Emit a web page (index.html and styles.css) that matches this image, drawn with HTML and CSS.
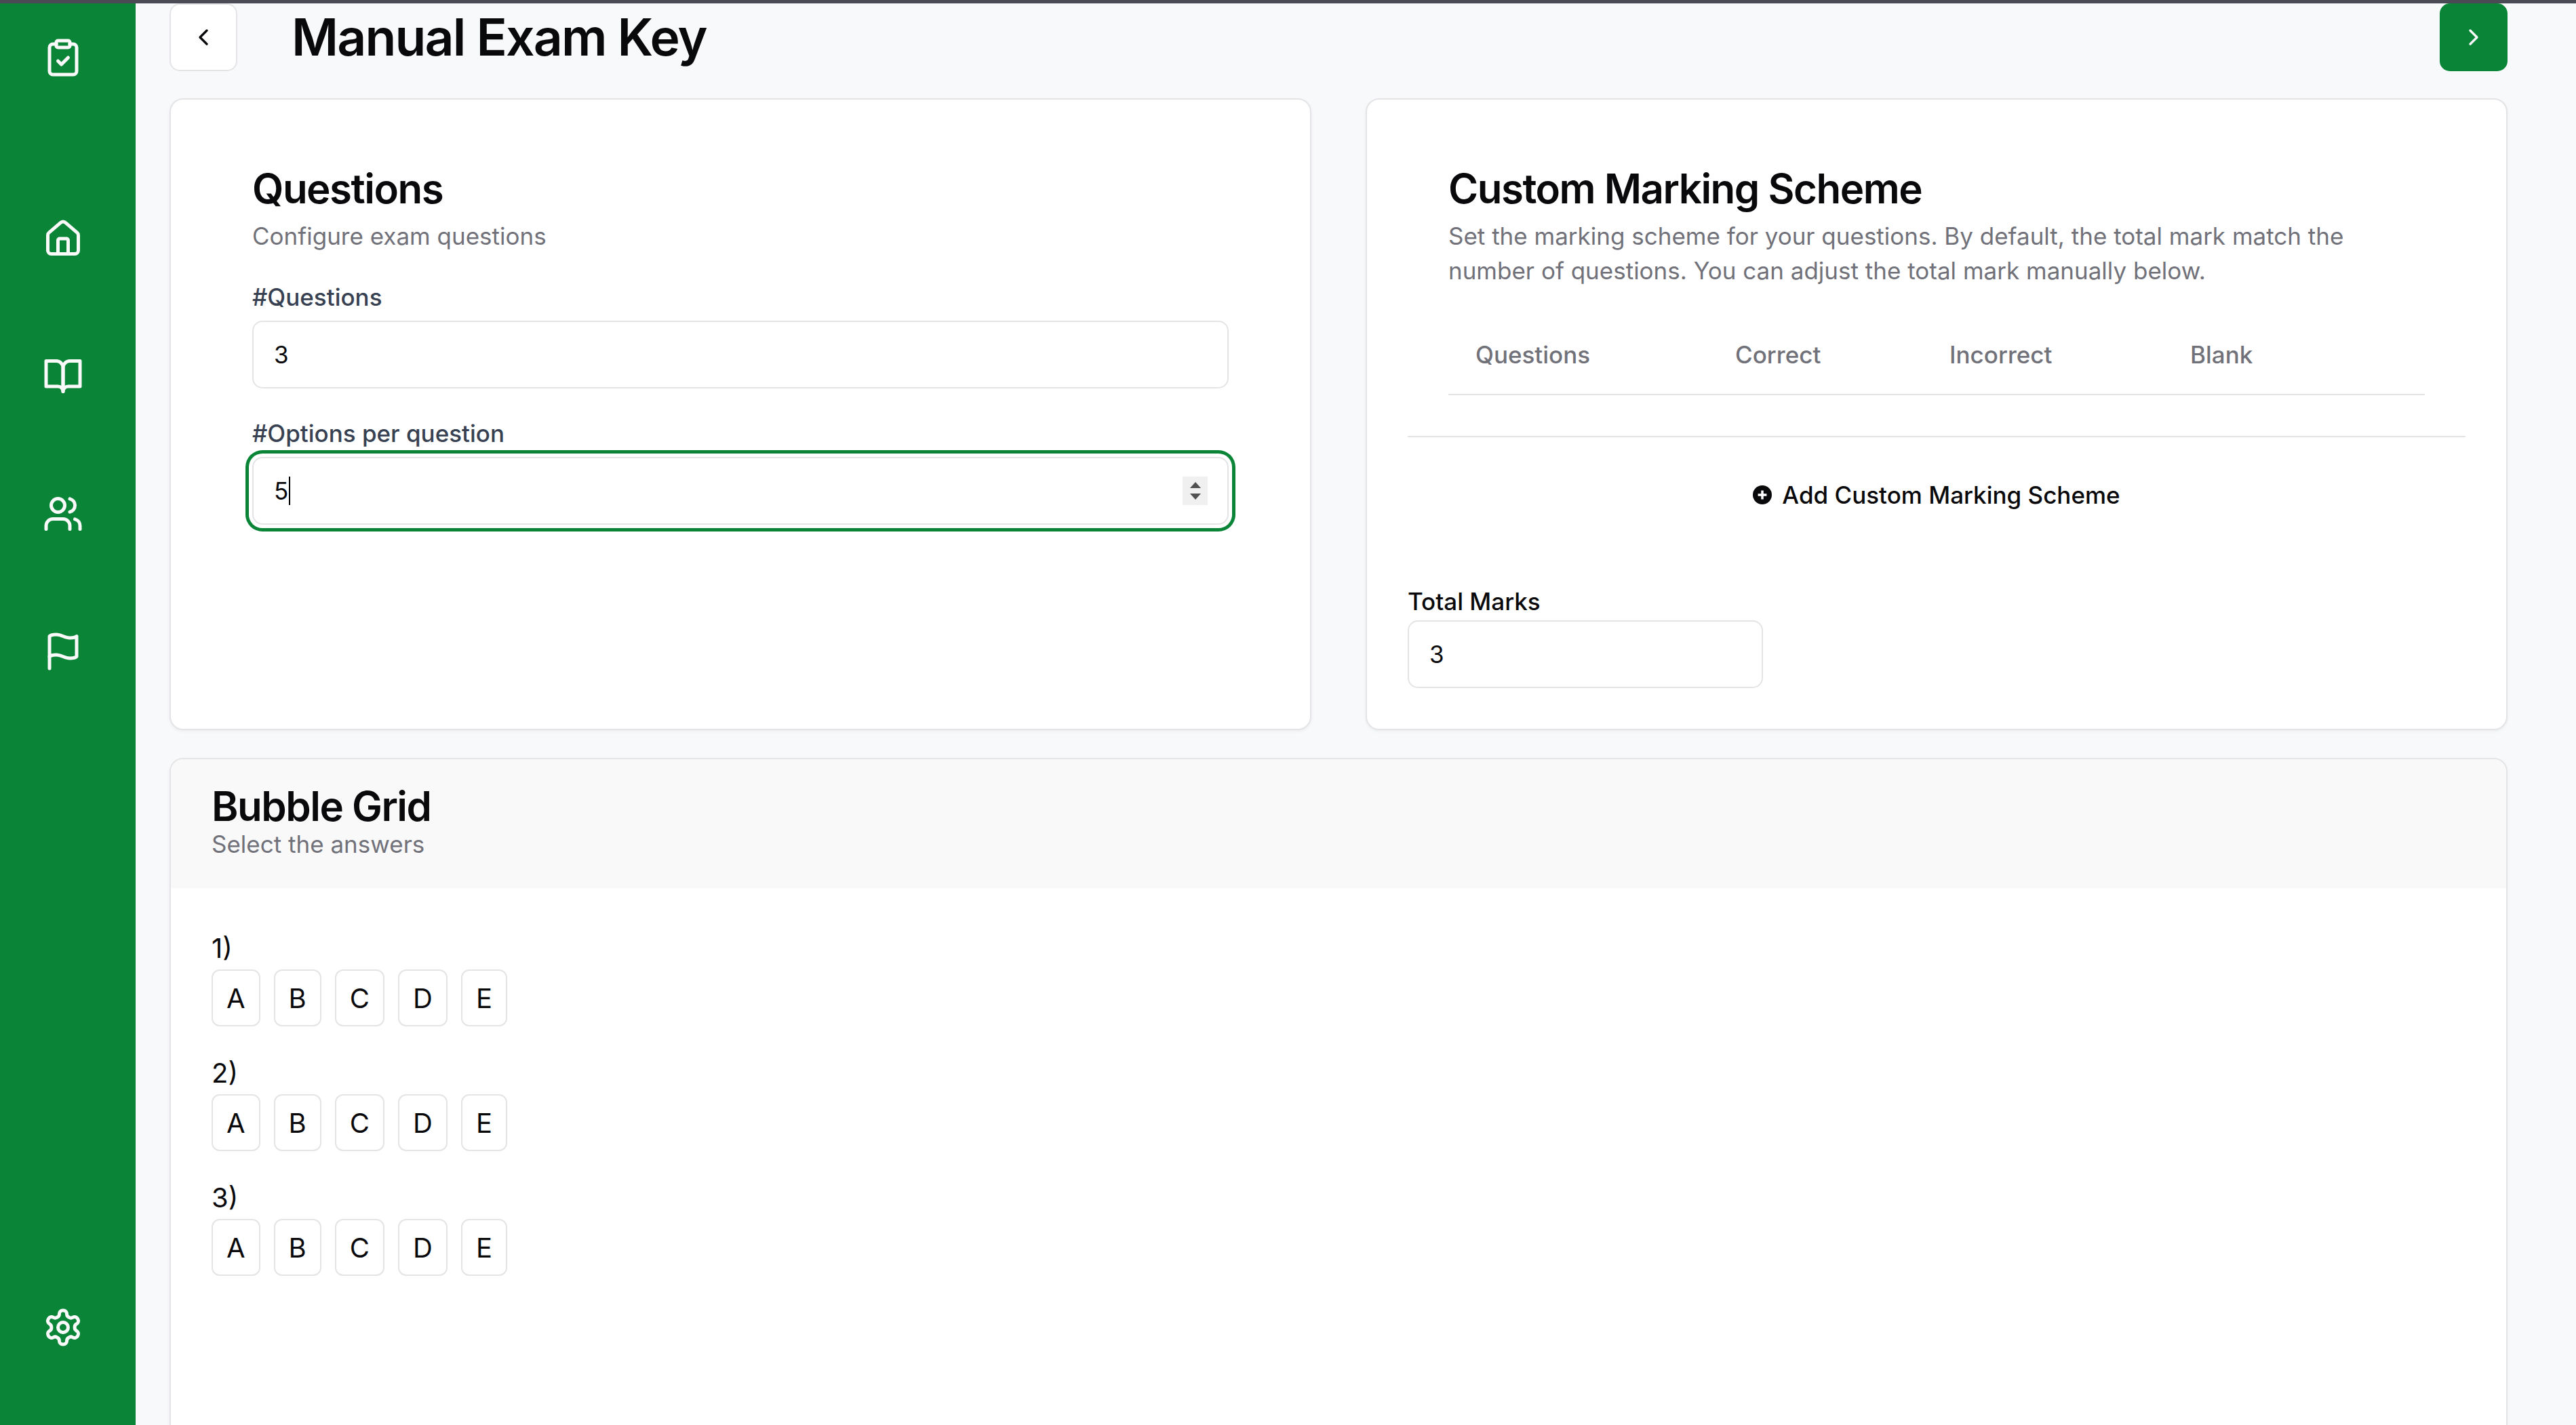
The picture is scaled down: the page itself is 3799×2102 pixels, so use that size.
FILE: index.html
```html
<!DOCTYPE html>
<html lang="en">
<head>
    <meta charset="UTF-8">
    <title>Manual Exam Key</title>
    <link rel="stylesheet" href="styles.css">
</head>
<body>
    <div class="top-strip"></div>
    <div class="app">
        <!-- Sidebar -->
        <aside class="sidebar">
            <svg class="side-icon logo" viewBox="0 0 24 24"><rect x="8" y="2" width="8" height="4" rx="1"/><path d="M16 4h2a2 2 0 0 1 2 2v14a2 2 0 0 1-2 2H6a2 2 0 0 1-2-2V6a2 2 0 0 1 2-2h2"/><path d="m9 14 2 2 4-4"/></svg>
            <nav class="side-nav">
                <svg class="side-icon" viewBox="0 0 24 24"><path d="M15 21v-8a1 1 0 0 0-1-1h-4a1 1 0 0 0-1 1v8"/><path d="M3 10a2 2 0 0 1 .709-1.528l7-5.999a2 2 0 0 1 2.582 0l7 5.999A2 2 0 0 1 21 10v9a2 2 0 0 1-2 2H5a2 2 0 0 1-2-2z"/></svg>
                <svg class="side-icon" viewBox="0 0 24 24"><path d="M2 3h6a4 4 0 0 1 4 4v14a3 3 0 0 0-3-3H2z"/><path d="M22 3h-6a4 4 0 0 0-4 4v14a3 3 0 0 1 3-3h7z"/></svg>
                <svg class="side-icon" viewBox="0 0 24 24"><path d="M16 21v-2a4 4 0 0 0-4-4H6a4 4 0 0 0-4 4v2"/><circle cx="9" cy="7" r="4"/><path d="M22 21v-2a4 4 0 0 0-3-3.87"/><path d="M16 3.13a4 4 0 0 1 0 7.75"/></svg>
                <svg class="side-icon" viewBox="0 0 24 24"><path d="M4 15s1-1 4-1 5 2 8 2 4-1 4-1V3s-1 1-4 1-5-2-8-2-4 1-4 1z"/><path d="M4 22v-7"/></svg>
            </nav>
            <svg class="side-icon settings" viewBox="0 0 24 24"><path d="M12.22 2h-.44a2 2 0 0 0-2 2v.18a2 2 0 0 1-1 1.73l-.43.25a2 2 0 0 1-2 0l-.15-.08a2 2 0 0 0-2.73.73l-.22.38a2 2 0 0 0 .73 2.73l.15.1a2 2 0 0 1 1 1.72v.51a2 2 0 0 1-1 1.74l-.15.09a2 2 0 0 0-.73 2.73l.22.38a2 2 0 0 0 2.73.73l.15-.08a2 2 0 0 1 2 0l.43.25a2 2 0 0 1 1 1.73V20a2 2 0 0 0 2 2h.44a2 2 0 0 0 2-2v-.18a2 2 0 0 1 1-1.73l.43-.25a2 2 0 0 1 2 0l.15.08a2 2 0 0 0 2.73-.73l.22-.39a2 2 0 0 0-.73-2.73l-.15-.08a2 2 0 0 1-1-1.74v-.5a2 2 0 0 1 1-1.74l.15-.09a2 2 0 0 0 .73-2.73l-.22-.38a2 2 0 0 0-2.73-.73l-.15.08a2 2 0 0 1-2 0l-.43-.25a2 2 0 0 1-1-1.73V4a2 2 0 0 0-2-2z"/><circle cx="12" cy="12" r="3"/></svg>
        </aside>

        <main class="main">
            <!-- Page header -->
            <header class="page-head">
                <button class="nav-btn"><svg class="chevron" viewBox="0 0 24 24"><path d="m15 18-6-6 6-6"/></svg></button>
                <h1 class="page-title">Manual Exam Key</h1>
                <button class="nav-btn next"><svg class="chevron" viewBox="0 0 24 24"><path d="m9 18 6-6-6-6"/></svg></button>
            </header>

            <div class="card-row">
                <!-- Questions -->
                <section class="card">
                    <div class="card-head">
                        <h2 class="card-title">Questions</h2>
                        <p class="card-sub">Configure exam questions</p>
                    </div>
                    <div class="question-fields">
                        <label class="field-label">#Questions</label>
                        <div class="field">3</div>
                        <label class="field-label second">#Options per question</label>
                        <div class="field focused">
                            <span>5</span><span class="caret"></span>
                            <span class="spinner"><i class="arrow up"></i><i class="arrow down"></i></span>
                        </div>
                    </div>
                </section>

                <!-- Marking scheme -->
                <section class="card">
                    <div class="card-head">
                        <h2 class="card-title">Custom Marking Scheme</h2>
                        <p class="card-sub">Set the marking scheme for your questions. By default, the total mark match the number of questions. You can adjust the total mark manually below.</p>
                    </div>
                    <div class="scheme-table">
                        <span>Questions</span>
                        <span>Correct</span>
                        <span>Incorrect</span>
                        <span>Blank</span>
                    </div>
                    <div class="scheme-add">
                        <button class="add-btn">
                            <svg class="plus-icon" viewBox="0 0 24 24"><circle cx="12" cy="12" r="12"/><path d="M12 6.5v11M6.5 12h11"/></svg>
                            Add Custom Marking Scheme
                        </button>
                    </div>
                    <div class="total-marks">
                        <label class="field-label dark">Total Marks</label>
                        <div class="field">3</div>
                    </div>
                </section>
            </div>

            <!-- Bubble grid -->
            <section class="card bubble-card">
                <div class="bubble-head">
                    <h2 class="card-title">Bubble Grid</h2>
                    <p class="card-sub">Select the answers</p>
                </div>
                <div class="bubble-body">
                    <div class="question">
                        <div class="question-num">1)</div>
                        <div class="options"><button>A</button><button>B</button><button>C</button><button>D</button><button>E</button></div>
                    </div>
                    <div class="question">
                        <div class="question-num">2)</div>
                        <div class="options"><button>A</button><button>B</button><button>C</button><button>D</button><button>E</button></div>
                    </div>
                    <div class="question">
                        <div class="question-num">3)</div>
                        <div class="options"><button>A</button><button>B</button><button>C</button><button>D</button><button>E</button></div>
                    </div>
                </div>
            </section>
        </main>
    </div>
</body>
</html>
```

FILE: styles.css
```css
/* Main styling */
* {
    box-sizing: border-box;
}

html {
    overflow: hidden;
}

body {
    margin: 0;
    height: 100vh;
    overflow: hidden;
    display: flex;
    flex-direction: column;
    font-family: Inter, "Liberation Sans", sans-serif;
    background-color: #f8f9fb;
    color: #09090b;
}

button {
    font-family: inherit;
    cursor: pointer;
}

.top-strip {
    height: 5px;
    flex-shrink: 0;
    background-color: #4a4b55;
}

.app {
    display: flex;
    flex: 1;
    min-height: 0;
}

/* Sidebar */
.sidebar {
    width: 200px;
    flex-shrink: 0;
    display: flex;
    flex-direction: column;
    align-items: center;
    padding: 50px 14px 114px 0;
    background-color: #0a8537;
}

.side-icon {
    width: 60px;
    height: 60px;
    flex-shrink: 0;
    fill: none;
    stroke: #fafafa;
    stroke-width: 2;
    stroke-linecap: round;
    stroke-linejoin: round;
}

.side-nav {
    display: flex;
    flex-direction: column;
    gap: 143px;
    margin-top: 207px;
}

.settings {
    margin-top: auto;
}

/* Main column */
.main {
    flex: 1;
    min-width: 0;
    height: 100%;
    overflow: hidden;
    padding: 0 101px 0 50px;
}

.page-head {
    display: flex;
    align-items: center;
    height: 100px;
}

.nav-btn {
    width: 100px;
    height: 100px;
    padding: 0;
    display: flex;
    align-items: center;
    justify-content: center;
    background: #ffffff;
    border: 2px solid #e4e4e7;
    border-radius: 15px;
    color: #09090b;
}

.nav-btn.next {
    margin-left: auto;
    background: #0a8537;
    border-color: #0a8537;
    color: #fafafa;
}

.chevron {
    width: 40px;
    height: 40px;
    fill: none;
    stroke: currentColor;
    stroke-width: 2;
    stroke-linecap: round;
    stroke-linejoin: round;
}

.page-title {
    margin: 0 0 0 80px;
    font-size: 75px;
    font-weight: 600;
    line-height: 100px;
    letter-spacing: -1.875px;
}

.card-row {
    display: grid;
    grid-template-columns: 1684px 1684px;
    gap: 80px;
    margin-top: 40px;
}

.card {
    height: 932px;
    background: #ffffff;
    border: 2px solid #e4e4e7;
    border-radius: 20px;
    box-shadow: 0 2px 5px rgba(0, 0, 0, 0.05);
}

.card-head {
    padding: 95px 120px 0;
}

.card-title {
    margin: 0;
    font-size: 60px;
    font-weight: 600;
    line-height: 72px;
    letter-spacing: -1.5px;
}

.card-sub {
    margin: 9px 0 0;
    font-size: 35px;
    line-height: 51px;
    color: #71717a;
}

/* Form fields */
.question-fields {
    padding: 44px 120px 0;
}

.field-label {
    display: block;
    font-size: 35px;
    font-weight: 500;
    line-height: 40px;
    color: #374151;
}

.field-label.second {
    margin-top: 46px;
}

.field-label.dark {
    color: #09090b;
}

.field {
    display: flex;
    align-items: center;
    height: 100px;
    margin-top: 15px;
    padding: 0 30px;
    background: #ffffff;
    border: 2px solid #e4e4e7;
    border-radius: 15px;
    font-size: 35px;
}

.field.focused {
    box-shadow: 0 0 0 5px #ffffff, 0 0 0 10px #0a8537;
}

.caret {
    width: 2px;
    height: 42px;
    margin-left: 1px;
    background: #000000;
}

.spinner {
    width: 37px;
    height: 42px;
    margin-left: auto;
    margin-right: -1px;
    display: flex;
    flex-direction: column;
    align-items: center;
    justify-content: center;
    gap: 8px;
    background: #f0f0f0;
}

.arrow {
    width: 0;
    height: 0;
    border-left: 8px solid transparent;
    border-right: 8px solid transparent;
}

.arrow.up {
    border-bottom: 9px solid #505050;
}

.arrow.down {
    border-top: 9px solid #505050;
}

/* Marking scheme */
.scheme-table {
    display: grid;
    grid-template-columns: 383px 316px 355px 1fr;
    height: 118px;
    margin: 40px 120px 0;
    padding-top: 38px;
    border-bottom: 2px solid #e4e4e7;
    font-size: 35px;
    font-weight: 500;
    line-height: 40px;
    color: #71717a;
}

.scheme-table span {
    padding-left: 40px;
}

.scheme-add {
    height: 172px;
    margin: 60px 60px 0;
    border-top: 2px solid #e4e4e7;
    display: flex;
    align-items: center;
    justify-content: center;
}

.add-btn {
    display: flex;
    align-items: center;
    gap: 15px;
    padding: 0;
    border: none;
    background: none;
    font-size: 35px;
    font-weight: 500;
    color: #09090b;
}

.plus-icon {
    width: 28px;
    height: 28px;
}

.plus-icon circle {
    fill: #09090b;
}

.plus-icon path {
    fill: none;
    stroke: #ffffff;
    stroke-width: 3;
}

.total-marks {
    width: 524px;
    margin: 52px 0 0 60px;
}

.total-marks .field {
    margin-top: 8px;
}

/* Bubble grid */
.bubble-card {
    height: 1100px;
    margin-top: 41px;
    overflow: hidden;
}

.bubble-head {
    height: 190px;
    padding: 33px 60px 0;
    background: #f9f9fa;
}

.bubble-head .card-sub {
    margin-top: 0;
    line-height: 40px;
}

.bubble-body {
    display: flex;
    flex-direction: column;
    gap: 44px;
    padding: 64px 60px 0;
}

.question-num {
    font-size: 40px;
    line-height: 50px;
    color: #09090b;
}

.options {
    display: flex;
    gap: 20px;
    margin-top: 6px;
}

.options button {
    height: 84px;
    padding: 0 20px;
    background: #ffffff;
    border: 2px solid #e4e4e7;
    border-radius: 12px;
    font-size: 40px;
    color: #09090b;
}
```
